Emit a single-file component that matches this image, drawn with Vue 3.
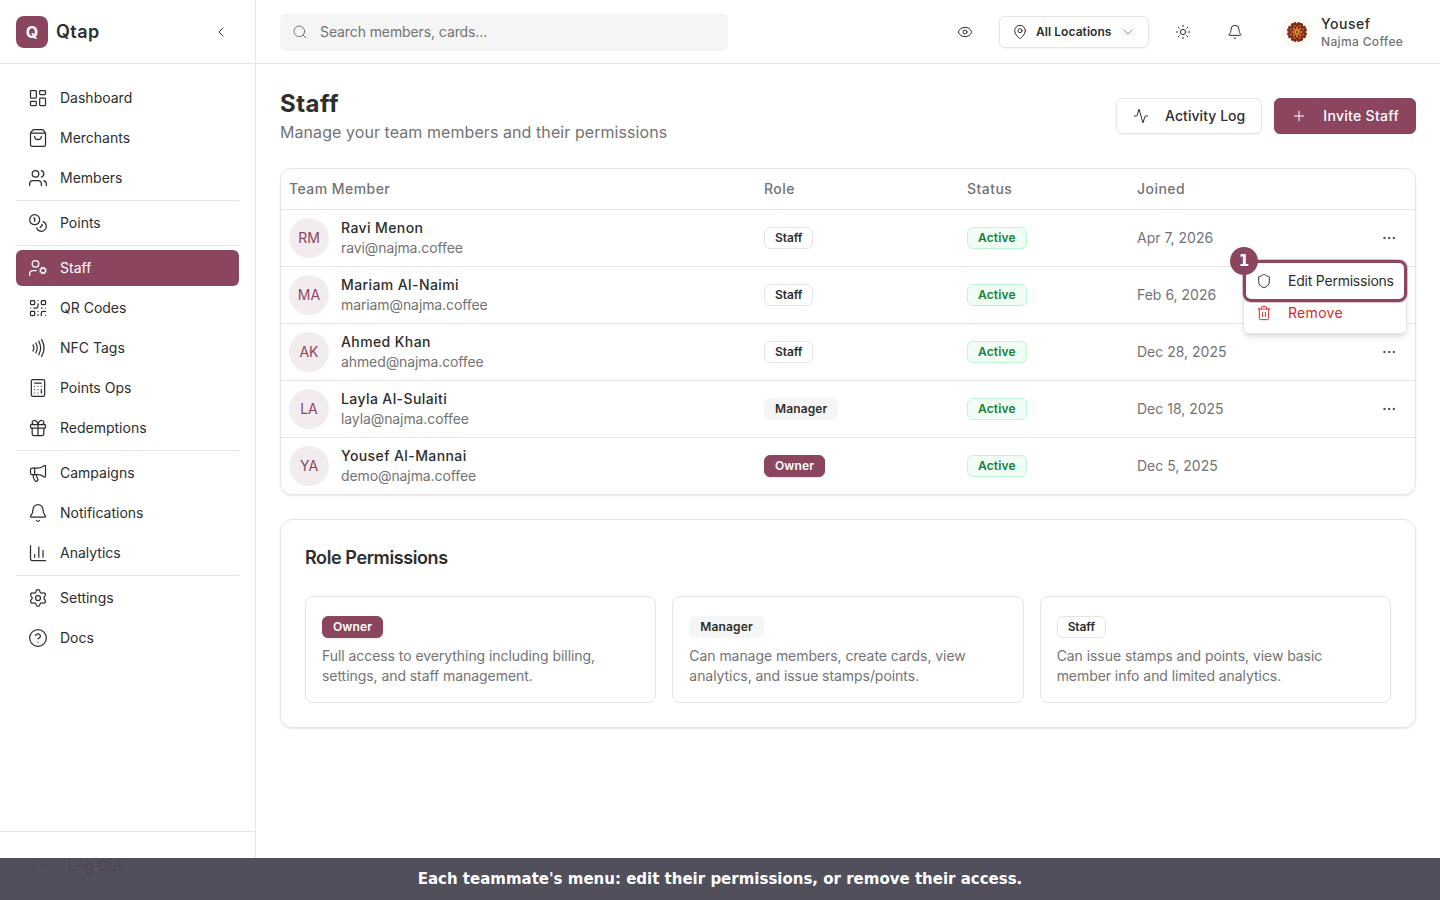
<template>
  <div class="app">
    <aside class="sidebar">
      <div class="brand">
        <div class="brand-logo">Q</div>
        <span class="brand-name">Qtap</span>
        <button class="collapse-btn">
          <svg class="icon-sm" viewBox="0 0 24 24" v-html="icons.chevronLeft"></svg>
        </button>
      </div>

      <nav class="nav">
        <template v-for="(group, i) in navGroups" :key="i">
          <div v-if="i > 0" class="nav-divider"></div>
          <a v-for="item in group" :key="item.label" class="nav-item" :class="{ active: item.label === 'Staff' }">
            <svg class="icon-md" viewBox="0 0 24 24" v-html="icons[item.icon]"></svg>
            <span>{{ item.label }}</span>
          </a>
        </template>
      </nav>

      <div class="sidebar-footer">
        <button class="logout-btn">
          <svg class="icon-sm" viewBox="0 0 24 24" v-html="icons.logout"></svg>
          <span>Log Out</span>
        </button>
      </div>
    </aside>

    <div class="content">
      <header class="topbar">
        <div class="search">
          <svg class="icon-sm" viewBox="0 0 24 24" v-html="icons.search"></svg>
          <span>Search members, cards...</span>
        </div>
        <div class="topbar-actions">
          <button class="icon-btn"><svg class="icon-sm" viewBox="0 0 24 24" v-html="icons.eye"></svg></button>
          <button class="location-btn">
            <svg class="icon-sm" viewBox="0 0 24 24" v-html="icons.pin"></svg>
            <span>All Locations</span>
            <svg class="icon-sm chevron" viewBox="0 0 24 24" v-html="icons.chevronDown"></svg>
          </button>
          <button class="icon-btn"><svg class="icon-sm" viewBox="0 0 24 24" v-html="icons.sun"></svg></button>
          <button class="icon-btn"><svg class="icon-sm" viewBox="0 0 24 24" v-html="icons.bell"></svg></button>
          <button class="user-btn">
            <svg class="user-avatar" viewBox="0 0 32 32">
              <circle cx="16" cy="16" r="16" fill="#fdf8f1" />
              <circle cx="16" cy="16" r="8.4" fill="#8a351f" />
              <g v-for="n in 8" :key="n" :transform="`rotate(${n * 45 + 22.5} 16 16)`">
                <circle cx="14.6" cy="7.6" r="1.7" fill="#7a2a1c" />
                <circle cx="17.4" cy="7.6" r="1.7" fill="#7a2a1c" />
                <circle cx="16" cy="9.4" r="1.2" fill="#b0562c" />
              </g>
              <circle cx="16" cy="16" r="5.4" fill="#6f2417" />
              <g v-for="n in 8" :key="'p' + n" :transform="`rotate(${n * 45} 16 16)`">
                <ellipse cx="16" cy="12.2" rx="1" ry="1.7" fill="#d9822b" />
              </g>
              <circle cx="16" cy="16" r="2.4" fill="#e8963a" />
              <circle cx="16" cy="16" r="1.1" fill="#7a2a1a" />
            </svg>
            <span class="user-info">
              <span class="user-name">Yousef</span>
              <span class="user-org">Najma Coffee</span>
            </span>
          </button>
        </div>
      </header>

      <main class="page">
        <div class="page-header">
          <div>
            <h1>Staff</h1>
            <p>Manage your team members and their permissions</p>
          </div>
          <div class="page-actions">
            <button class="btn btn-outline">
              <svg class="icon-sm" viewBox="0 0 24 24" v-html="icons.activity"></svg>
              <span>Activity Log</span>
            </button>
            <button class="btn btn-primary">
              <svg class="icon-sm" viewBox="0 0 24 24" v-html="icons.plus"></svg>
              <span>Invite Staff</span>
            </button>
          </div>
        </div>

        <section class="card table">
          <div class="row row-head">
            <div>Team Member</div>
            <div>Role</div>
            <div>Status</div>
            <div>Joined</div>
          </div>
          <div v-for="(member, i) in members" :key="member.email" class="row">
            <div class="member">
              <div class="avatar">{{ member.initials }}</div>
              <div class="member-info">
                <span class="member-name">{{ member.name }}</span>
                <span class="member-email">{{ member.email }}</span>
              </div>
            </div>
            <div><span class="badge" :class="member.role.toLowerCase()">{{ member.role }}</span></div>
            <div><span class="badge active-status">Active</span></div>
            <div class="joined">{{ member.joined }}</div>
            <div class="row-actions">
              <button v-if="member.role !== 'Owner'" class="more-btn">
                <svg class="icon-sm" viewBox="0 0 24 24" v-html="icons.more"></svg>
              </button>
              <div v-if="i === 0" class="menu">
                <button class="menu-item">
                  <svg class="icon-sm" viewBox="0 0 24 24" v-html="icons.shield"></svg>
                  <span>Edit Permissions</span>
                </button>
                <button class="menu-item danger">
                  <svg class="icon-sm" viewBox="0 0 24 24" v-html="icons.trash"></svg>
                  <span>Remove</span>
                </button>
                <div class="highlight"><span class="step">1</span></div>
              </div>
            </div>
          </div>
        </section>

        <section class="card roles">
          <h2>Role Permissions</h2>
          <div class="role-grid">
            <div v-for="role in roles" :key="role.name" class="role-card">
              <span class="badge" :class="role.name.toLowerCase()">{{ role.name }}</span>
              <p>{{ role.description }}</p>
            </div>
          </div>
        </section>
      </main>
    </div>

    <div class="caption">Each teammate's menu: edit their permissions, or remove their access.</div>
  </div>
</template>

<script setup>
const navGroups = [
  [
    { label: 'Dashboard', icon: 'dashboard' },
    { label: 'Merchants', icon: 'bag' },
    { label: 'Members', icon: 'users' }
  ],
  [{ label: 'Points', icon: 'coins' }],
  [
    { label: 'Staff', icon: 'userCog' },
    { label: 'QR Codes', icon: 'qr' },
    { label: 'NFC Tags', icon: 'nfc' },
    { label: 'Points Ops', icon: 'calculator' },
    { label: 'Redemptions', icon: 'gift' }
  ],
  [
    { label: 'Campaigns', icon: 'megaphone' },
    { label: 'Notifications', icon: 'bell' },
    { label: 'Analytics', icon: 'chart' }
  ],
  [
    { label: 'Settings', icon: 'settings' },
    { label: 'Docs', icon: 'help' }
  ]
]

const members = [
  { initials: 'RM', name: 'Ravi Menon', email: 'ravi@najma.coffee', role: 'Staff', joined: 'Apr 7, 2026' },
  { initials: 'MA', name: 'Mariam Al-Naimi', email: 'mariam@najma.coffee', role: 'Staff', joined: 'Feb 6, 2026' },
  { initials: 'AK', name: 'Ahmed Khan', email: 'ahmed@najma.coffee', role: 'Staff', joined: 'Dec 28, 2025' },
  { initials: 'LA', name: 'Layla Al-Sulaiti', email: 'layla@najma.coffee', role: 'Manager', joined: 'Dec 18, 2025' },
  { initials: 'YA', name: 'Yousef Al-Mannai', email: 'demo@najma.coffee', role: 'Owner', joined: 'Dec 5, 2025' }
]

const roles = [
  { name: 'Owner', description: 'Full access to everything including billing, settings, and staff management.' },
  { name: 'Manager', description: 'Can manage members, create cards, view analytics, and issue stamps/points.' },
  { name: 'Staff', description: 'Can issue stamps and points, view basic member info and limited analytics.' }
]

// 24x24 stroke icons
const icons = {
  chevronLeft: '<path d="m15 18-6-6 6-6"/>',
  chevronDown: '<path d="m6 9 6 6 6-6"/>',
  dashboard: '<rect width="7" height="9" x="3" y="3" rx="1"/><rect width="7" height="5" x="14" y="3" rx="1"/><rect width="7" height="9" x="14" y="12" rx="1"/><rect width="7" height="5" x="3" y="16" rx="1"/>',
  bag: '<path d="M16 10a4 4 0 0 1-8 0"/><path d="M3.103 6.034h17.794"/><path d="M3.4 5.467a2 2 0 0 0-.4 1.2V20a2 2 0 0 0 2 2h14a2 2 0 0 0 2-2V6.667a2 2 0 0 0-.4-1.2l-2-2.667A2 2 0 0 0 17 2H7a2 2 0 0 0-1.6.8z"/>',
  users: '<path d="M16 21v-2a4 4 0 0 0-4-4H6a4 4 0 0 0-4 4v2"/><path d="M16 3.128a4 4 0 0 1 0 7.744"/><path d="M22 21v-2a4 4 0 0 0-3-3.87"/><circle cx="9" cy="7" r="4"/>',
  coins: '<circle cx="8" cy="8" r="6"/><path d="M18.09 10.37A6 6 0 1 1 10.34 18"/><path d="M7 6h1v4"/><path d="m16.71 13.88.7.71-2.82 2.82"/>',
  userCog: '<path d="M10 15H6a4 4 0 0 0-4 4v2"/><path d="m14.305 16.53.923-.382"/><path d="m15.228 13.852-.923-.383"/><path d="m16.852 12.228-.383-.923"/><path d="m16.852 17.772-.383.924"/><path d="m19.148 12.228.383-.923"/><path d="m19.53 18.696-.382-.924"/><path d="m20.772 13.852.924-.383"/><path d="m20.772 16.148.924.383"/><circle cx="18" cy="15" r="3"/><circle cx="9" cy="7" r="4"/>',
  qr: '<rect width="5" height="5" x="3" y="3" rx="1"/><rect width="5" height="5" x="16" y="3" rx="1"/><rect width="5" height="5" x="3" y="16" rx="1"/><path d="M21 16h-3a2 2 0 0 0-2 2v3"/><path d="M21 21v.01"/><path d="M12 7v3a2 2 0 0 1-2 2H7"/><path d="M3 12h.01"/><path d="M12 3h.01"/><path d="M12 16v.01"/><path d="M16 12h1"/><path d="M21 12v.01"/><path d="M12 21v-1"/>',
  nfc: '<path d="M6 8.32a7.43 7.43 0 0 1 0 7.36"/><path d="M9.46 6.21a11.76 11.76 0 0 1 0 11.58"/><path d="M12.91 4.1a15.91 15.91 0 0 1 .01 15.8"/><path d="M16.37 2a20.16 20.16 0 0 1 0 20"/>',
  calculator: '<rect width="16" height="20" x="4" y="2" rx="2"/><path d="M8 6h8"/><path d="M16 14v4"/><path d="M16 10h.01"/><path d="M12 10h.01"/><path d="M8 10h.01"/><path d="M12 14h.01"/><path d="M8 14h.01"/><path d="M12 18h.01"/><path d="M8 18h.01"/>',
  gift: '<rect x="3" y="8" width="18" height="4" rx="1"/><path d="M12 8v13"/><path d="M19 12v7a2 2 0 0 1-2 2H7a2 2 0 0 1-2-2v-7"/><path d="M7.5 8a2.5 2.5 0 0 1 0-5A4.8 8 0 0 1 12 8a4.8 8 0 0 1 4.5-5 2.5 2.5 0 0 1 0 5"/>',
  megaphone: '<path d="M11 6a13 13 0 0 0 8.4-2.8A1 1 0 0 1 21 4v12a1 1 0 0 1-1.6.8A13 13 0 0 0 11 14H5a2 2 0 0 1-2-2V8a2 2 0 0 1 2-2z"/><path d="M6 14a12 12 0 0 0 2.4 7.2 2 2 0 0 0 3.2-2.4A8 8 0 0 1 10 14"/><path d="M8 6v8"/>',
  bell: '<path d="M10.268 21a2 2 0 0 0 3.464 0"/><path d="M3.262 15.326A1 1 0 0 0 4 17h16a1 1 0 0 0 .74-1.673C19.41 13.956 18 12.499 18 8A6 6 0 0 0 6 8c0 4.499-1.411 5.956-2.738 7.326"/>',
  chart: '<path d="M3 3v16a2 2 0 0 0 2 2h16"/><path d="M18 17V9"/><path d="M13 17V5"/><path d="M8 17v-3"/>',
  settings: '<path d="M9.671 4.136a2.34 2.34 0 0 1 4.659 0 2.34 2.34 0 0 0 3.319 1.915 2.34 2.34 0 0 1 2.33 4.033 2.34 2.34 0 0 0 0 3.831 2.34 2.34 0 0 1-2.33 4.033 2.34 2.34 0 0 0-3.319 1.915 2.34 2.34 0 0 1-4.659 0 2.34 2.34 0 0 0-3.32-1.915 2.34 2.34 0 0 1-2.33-4.033 2.34 2.34 0 0 0 0-3.831A2.34 2.34 0 0 1 6.35 6.051a2.34 2.34 0 0 0 3.319-1.915"/><circle cx="12" cy="12" r="3"/>',
  help: '<circle cx="12" cy="12" r="10"/><path d="M9.09 9a3 3 0 0 1 5.83 1c0 2-3 3-3 3"/><path d="M12 17h.01"/>',
  logout: '<path d="M4 4v16"/><path d="M9 12h12"/><path d="m16 7 5 5-5 5"/>',
  search: '<circle cx="11" cy="11" r="8"/><path d="m21 21-4.34-4.34"/>',
  eye: '<path d="M2.062 12.348a1 1 0 0 1 0-.696 10.75 10.75 0 0 1 19.876 0 1 1 0 0 1 0 .696 10.75 10.75 0 0 1-19.876 0"/><circle cx="12" cy="12" r="3"/>',
  pin: '<path d="M20 10c0 4.993-5.539 10.193-7.399 11.799a1 1 0 0 1-1.202 0C9.539 20.193 4 14.993 4 10a8 8 0 0 1 16 0"/><circle cx="12" cy="10" r="3"/>',
  sun: '<circle cx="12" cy="12" r="4"/><path d="M12 2v2"/><path d="M12 20v2"/><path d="m4.93 4.93 1.41 1.41"/><path d="m17.66 17.66 1.41 1.41"/><path d="M2 12h2"/><path d="M20 12h2"/><path d="m6.34 17.66-1.41 1.41"/><path d="m19.07 4.93-1.41 1.41"/>',
  activity: '<path d="M22 12h-2.48a2 2 0 0 0-1.93 1.46l-2.35 8.36a.25.25 0 0 1-.48 0L9.24 2.18a.25.25 0 0 0-.48 0l-2.35 8.36A2 2 0 0 1 4.49 12H2"/>',
  plus: '<path d="M5 12h14"/><path d="M12 5v14"/>',
  more: '<circle cx="12" cy="12" r="1"/><circle cx="19" cy="12" r="1"/><circle cx="5" cy="12" r="1"/>',
  shield: '<path d="M20 13c0 5-3.5 7.5-7.66 8.95a1 1 0 0 1-.67-.01C7.5 20.5 4 18 4 13V6a1 1 0 0 1 1-1c2 0 4.5-1.2 6.24-2.72a1.17 1.17 0 0 1 1.52 0C14.51 3.81 17 5 19 5a1 1 0 0 1 1 1z"/>',
  trash: '<path d="M10 11v6"/><path d="M14 11v6"/><path d="M19 6v14a2 2 0 0 1-2 2H7a2 2 0 0 1-2-2V6"/><path d="M3 6h18"/><path d="M8 6V4a2 2 0 0 1 2-2h4a2 2 0 0 1 2 2v2"/>'
}
</script>

<style>
body {
  margin: 0;
  background: #fff;
}
</style>

<style scoped>
.app {
  display: flex;
  height: 100vh;
  overflow: hidden;
  position: relative;
  background: #fff;
  color: #2e2e2e;
  font-family: Inter, "Liberation Sans", sans-serif;
  font-size: 14px;
  line-height: 20px;
}

.app * {
  box-sizing: border-box;
}

button {
  font: inherit;
  color: inherit;
  letter-spacing: inherit;
  background: none;
  border: none;
  padding: 0;
  cursor: pointer;
}

svg {
  flex-shrink: 0;
  display: block;
}

.icon-sm,
.icon-md {
  width: 16px;
  height: 16px;
  fill: none;
  stroke: currentColor;
  stroke-width: 1.5;
  stroke-linecap: round;
  stroke-linejoin: round;
}

.icon-md {
  width: 20px;
  height: 20px;
}

/* Sidebar */
.sidebar {
  width: 256px;
  flex-shrink: 0;
  display: flex;
  flex-direction: column;
  border-right: 1px solid #e5e5e5;
}

.brand {
  height: 64px;
  flex-shrink: 0;
  display: flex;
  align-items: center;
  gap: 8px;
  padding: 0 16px;
  border-bottom: 1px solid #e5e5e5;
}

.brand-logo {
  width: 32px;
  height: 32px;
  border-radius: 8px;
  background: #8b455e;
  color: #fff;
  font-size: 16px;
  font-weight: 700;
  display: flex;
  align-items: center;
  justify-content: center;
}

.brand-name {
  font-size: 18px;
  font-weight: 600;
  letter-spacing: 0.4px;
}

.collapse-btn {
  width: 36px;
  height: 36px;
  margin-left: auto;
  display: flex;
  align-items: center;
  justify-content: center;
}

.nav {
  flex: 1;
  display: flex;
  flex-direction: column;
  gap: 4px;
  padding: 16px;
}

.nav-item {
  height: 36px;
  display: flex;
  align-items: center;
  gap: 12px;
  padding: 0 12px;
  border-radius: 6px;
}

.nav-item.active {
  background: #8b455e;
  color: #fff;
}

.nav-divider {
  height: 1px;
  background: #e5e5e5;
}

.sidebar-footer {
  height: 69px;
  padding: 16px;
  border-top: 1px solid #e5e5e5;
}

.logout-btn {
  height: 36px;
  display: flex;
  align-items: center;
  gap: 20px;
  padding: 0 16px;
  color: #dc2626;
  font-weight: 500;
  letter-spacing: 0.25px;
}

/* Topbar */
.content {
  flex: 1;
  min-width: 0;
}

.topbar {
  height: 64px;
  display: flex;
  align-items: center;
  justify-content: space-between;
  padding: 0 24px;
  border-bottom: 1px solid #e5e5e5;
}

.search {
  width: 448px;
  height: 37px;
  margin-top: 2px;
  display: flex;
  align-items: center;
  gap: 12px;
  padding: 0 12px 1px;
  border-radius: 6px;
  background: #f5f5f5;
  color: #737373;
  letter-spacing: -0.1px;
}

.topbar-actions {
  display: flex;
  align-items: center;
  gap: 16px;
}

.icon-btn {
  width: 36px;
  height: 36px;
  display: flex;
  align-items: center;
  justify-content: center;
}

.location-btn {
  width: 150px;
  height: 32px;
  display: flex;
  align-items: center;
  gap: 8px;
  padding: 0 12px;
  border: 1px solid #e5e5e5;
  border-radius: 6px;
  box-shadow: 0 1px 2px rgba(0, 0, 0, 0.05);
  font-size: 12px;
  font-weight: 600;
  letter-spacing: 0.06px;
}

.location-btn .chevron {
  opacity: 0.5;
}

.user-btn {
  width: 147px;
  display: flex;
  align-items: center;
  gap: 8px;
  padding-left: 12px;
  text-align: left;
}

.user-avatar {
  width: 32px;
  height: 32px;
}

.user-info {
  display: flex;
  flex-direction: column;
}

.user-name {
  font-weight: 500;
  letter-spacing: 0.5px;
}

.user-org {
  font-size: 12px;
  line-height: 16px;
  font-weight: 500;
  letter-spacing: 0.35px;
  color: #737373;
}

/* Page */
.page {
  padding: 24px;
}

.page-header {
  display: flex;
  align-items: center;
  justify-content: space-between;
  height: 56px;
  margin-bottom: 24px;
}

h1 {
  margin: 0;
  font-size: 24px;
  line-height: 32px;
  font-weight: 700;
  letter-spacing: 0.5px;
}

.page-header p {
  margin: 0;
  font-size: 16px;
  line-height: 24px;
  letter-spacing: 0.07px;
  color: #737373;
}

.page-actions {
  display: flex;
  gap: 12px;
}

.btn {
  height: 36px;
  display: flex;
  align-items: center;
  gap: 16px;
  padding: 0 16px;
  border: 1px solid #e5e5e5;
  border-radius: 6px;
  box-shadow: 0 1px 2px rgba(0, 0, 0, 0.05);
  font-weight: 500;
}

.btn-outline {
  letter-spacing: 0.05px;
}

.btn-primary {
  background: #8b455e;
  border-color: #8b455e;
  color: #fff;
  letter-spacing: 0.3px;
}

.card {
  border: 1px solid #e5e5e5;
  border-radius: 12px;
  box-shadow: 0 1px 2px rgba(0, 0, 0, 0.1);
}

/* Staff table */
.row {
  display: grid;
  grid-template-columns: 475px 203px 170px 1fr 60px;
  align-items: center;
  height: 57px;
  border-bottom: 1px solid #e5e5e5;
}

.row:last-child {
  height: 56px;
  border-bottom: none;
}

.row > div {
  padding-left: 8px;
}

.row-head {
  height: 41px;
  color: #737373;
  font-weight: 500;
  letter-spacing: 0.45px;
}

.member {
  display: flex;
  align-items: center;
  gap: 12px;
}

.avatar {
  width: 40px;
  height: 40px;
  border-radius: 50%;
  background: #f3ecef;
  color: #8b455e;
  display: flex;
  align-items: center;
  justify-content: center;
}

.member-info {
  display: flex;
  flex-direction: column;
}

.member-name {
  font-weight: 500;
  letter-spacing: 0.4px;
}

.member-email,
.joined {
  color: #737373;
}

.member-email {
  letter-spacing: -0.1px;
}

.badge {
  display: inline-flex;
  align-items: center;
  height: 22px;
  padding: 0 10px;
  border: 1px solid #e5e5e5;
  border-radius: 6px;
  font-size: 12px;
  line-height: 16px;
  font-weight: 600;
  letter-spacing: 0.13px;
  vertical-align: middle;
}

.badge.staff {
  letter-spacing: -0.1px;
}

.badge.manager {
  background: #f5f5f5;
  border-color: #f5f5f5;
}

.badge.owner {
  background: #8b455e;
  border-color: #8b455e;
  color: #fff;
  box-shadow: 0 1px 2px rgba(0, 0, 0, 0.1);
}

.badge.active-status {
  background: #f0fdf4;
  border-color: #bbf7d0;
  color: #15803d;
}

.row-actions {
  position: relative;
  display: flex;
}

.more-btn {
  width: 36px;
  height: 36px;
  margin-left: 8px;
  display: flex;
  align-items: center;
  justify-content: center;
}

/* Row dropdown with the step marker */
.menu {
  position: absolute;
  top: 40px;
  right: 8px;
  z-index: 10;
  width: 164px;
  padding: 4px;
  background: #fff;
  border: 1px solid #e5e5e5;
  border-radius: 6px;
  box-shadow: 0 4px 6px -1px rgba(0, 0, 0, 0.1), 0 2px 4px -2px rgba(0, 0, 0, 0.1);
}

.menu-item {
  width: 100%;
  height: 32px;
  display: flex;
  align-items: center;
  gap: 16px;
  padding: 0 8px;
  white-space: nowrap;
  letter-spacing: -0.22px;
}

.menu-item.danger {
  color: #dc2626;
  letter-spacing: 0.3px;
}

.highlight {
  position: absolute;
  top: -1px;
  left: -1px;
  width: 164px;
  height: 42px;
  border: 3px solid #8b455e;
  border-radius: 8px;
  box-shadow: 0 0 0 1px rgba(139, 69, 94, 0.3);
}

.step {
  position: absolute;
  top: -16px;
  left: -16px;
  width: 28px;
  height: 28px;
  border-radius: 50%;
  background: #8b455e;
  color: #fff;
  font: 700 15px/28px "DejaVu Sans", sans-serif;
  letter-spacing: 0;
  text-align: center;
}

/* Role permissions */
.roles {
  margin-top: 24px;
  padding: 24px;
}

h2 {
  margin: 0 0 24px;
  font-size: 18px;
  line-height: 28px;
  font-weight: 600;
  letter-spacing: -0.4px;
}

.role-grid {
  display: grid;
  grid-template-columns: repeat(3, 1fr);
  gap: 16px;
}

.role-card {
  height: 107px;
  padding: 19px 16px 16px;
  border: 1px solid #e5e5e5;
  border-radius: 8px;
}

.role-card .badge {
  display: flex;
  width: fit-content;
}

.role-card p {
  margin: 8px 0 0;
  color: #737373;
  letter-spacing: -0.06px;
}

.caption {
  position: absolute;
  left: 0;
  right: 0;
  bottom: 0;
  z-index: 20;
  height: 42px;
  background: rgba(72, 70, 83, 0.95);
  color: #fff;
  font: 700 15px/42px "DejaVu Sans", sans-serif;
  text-align: center;
}
</style>
